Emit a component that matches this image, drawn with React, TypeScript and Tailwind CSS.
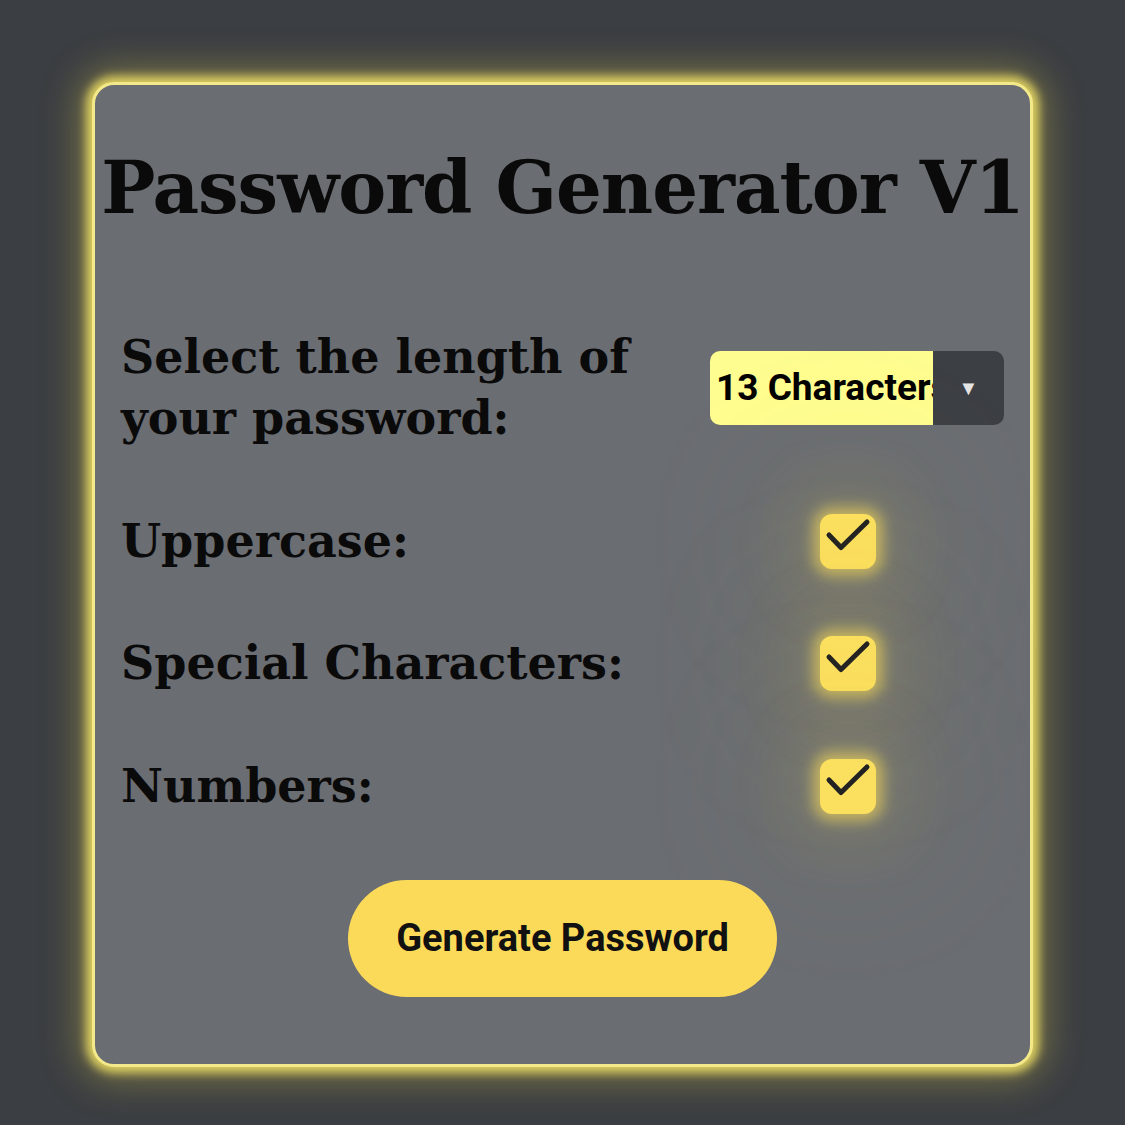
import React from "react";

function Check() {
  return (
    <div className="w-[56px] h-[55px] rounded-[12px] bg-[#fbdf5e] shadow-[0_0_14px_7px_rgba(250,222,90,0.6),0_0_60px_30px_rgba(220,200,90,0.12),0_0_140px_70px_rgba(210,195,90,0.06)]">
      <svg width="56" height="55" viewBox="0 0 56 55" fill="none" stroke="#222" strokeWidth="5" strokeLinecap="round" strokeLinejoin="round">
        <path d="M9 21l12 12.5L47 8" />
      </svg>
    </div>
  );
}

export default function App() {
  const serif = { fontFamily: '"DejaVu Serif", "Liberation Serif", serif' };
  const sans = { fontFamily: 'Roboto, "Liberation Sans", sans-serif' };
  return (
    <div className="w-[1125px] h-[1125px] bg-[#3b3e42] flex items-start justify-center pt-[82px]">
      <div className="w-[941px] h-[985px] rounded-[22px] bg-[#6a6d72] border-[3px] border-[#f4e98a] shadow-[0_0_10px_6px_rgba(240,225,100,0.85),0_0_36px_14px_rgba(230,210,80,0.35)] flex flex-col items-center">
        <h1 className="mt-[67px] text-[72px] font-bold text-[#0a0a0a] leading-none tracking-[-1px]" style={serif}>
          Password Generator V1
        </h1>
        <div className="w-full pl-[26px] pr-[26px] mt-[103px] flex flex-col">
          <div className="flex items-center justify-between">
            <div className="text-[46px] font-bold leading-[61px] text-[#0a0a0a] w-[560px]" style={serif}>
              Select the length of your password:
            </div>
            <div className="flex h-[74px] w-[294px] rounded-[10px] overflow-hidden mt-[-1px]">
              <div className="w-[223px] bg-[#fefd8f] flex items-center pl-[6px] overflow-hidden whitespace-nowrap text-[37px] font-bold text-black" style={sans}>
                13 Characters
              </div>
              <div className="flex-1 bg-[#3c3f44] flex items-center justify-center text-[#e5e5e5] text-[20px]">▼</div>
            </div>
          </div>
          <div className="flex items-center justify-between mt-[62px] h-[60px]">
            <div className="text-[46px] font-bold text-[#0a0a0a]" style={serif}>Uppercase:</div>
            <div className="mr-[128px]"><Check /></div>
          </div>
          <div className="flex items-center justify-between mt-[62px] h-[60px]">
            <div className="text-[46px] font-bold text-[#0a0a0a]" style={serif}>Special Characters:</div>
            <div className="mr-[128px]"><Check /></div>
          </div>
          <div className="flex items-center justify-between mt-[63px] h-[60px]">
            <div className="text-[46px] font-bold text-[#0a0a0a]" style={serif}>Numbers:</div>
            <div className="mr-[128px]"><Check /></div>
          </div>
        </div>
        <button className="mt-[64px] w-[429px] h-[117px] rounded-full bg-[#fbda5a] text-[38px] font-bold text-[#111]" style={sans}>
          Generate Password
        </button>
      </div>
    </div>
  );
}
